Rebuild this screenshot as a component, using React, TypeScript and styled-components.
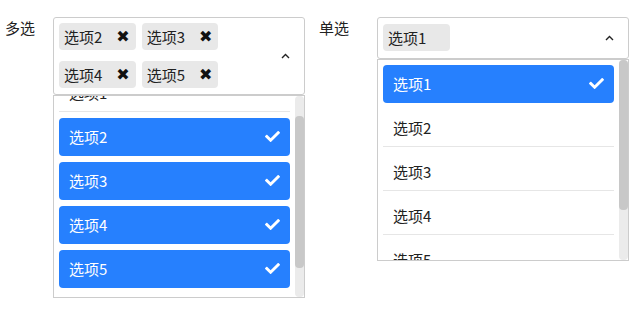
import React, { useEffect, useRef, useState } from 'react'
import styled, { createGlobalStyle } from 'styled-components'
import { FaCheck } from 'react-icons/fa'

const GlobalStyle = createGlobalStyle`
  body {
    margin: 0;
    font-family: "Noto Sans CJK SC", "Noto Sans", sans-serif;
    font-size: 15px;
    color: #222;
    background: #fff;
  }
`

const Page = styled.div`
  display: flex;
  align-items: flex-start;
  padding: 17px 0 0 5px;
`

const Field = styled.div`
  display: flex;
  align-items: flex-start;
  margin-right: 14px;
`

const Label = styled.div<{ $w: number }>`
  width: ${(p) => p.$w}px;
  line-height: 20px;
  padding-top: 1px;
`

const SelectWrap = styled.div`
  width: 252px;
  display: flex;
  flex-direction: column;
`

const SelectBox = styled.div`
  box-sizing: border-box;
  min-height: 42px;
  border: 1px solid #ccc;
  border-radius: 3px;
  padding: 5px 14px 6px 5px;
  display: flex;
  align-items: center;
`

const Tags = styled.div`
  flex: 1;
  display: flex;
  flex-wrap: wrap;
  gap: 11px 6px;
`

const Tag = styled.span<{ $single?: boolean }>`
  height: 27px;
  display: inline-flex;
  align-items: center;
  gap: 14px;
  padding: ${(p) => (p.$single ? '0 24px 0 5px' : '0 6px 0 5px')};
  background: #e8e8e8;
  border-radius: 4px;
  line-height: 1;
`

const Remove = styled.span`
  font-family: "DejaVu Sans", sans-serif;
  font-size: 16px;
  color: #111;
`

const Caret = styled.svg`
  width: 9px;
  height: 6px;
  flex: none;
`

const Dropdown = styled.div<{ $h: number }>`
  box-sizing: border-box;
  height: ${(p) => p.$h}px;
  border: 1px solid #ccc;
  display: flex;
`

const Viewport = styled.div`
  flex: 1;
  overflow: hidden;
`

const List = styled.div`
  padding: 5px 5px 42px 5px;
`

const Track = styled.div`
  width: 9px;
  flex: none;
  background: #ebebeb;
  border-radius: 4px;
  position: relative;
`

const Thumb = styled.div`
  position: absolute;
  left: 0;
  right: 0;
  background: #c8c8c8;
  border-radius: 4px;
`

const Option = styled.div<{ $selected: boolean }>`
  box-sizing: border-box;
  height: 38px;
  margin-bottom: 6px;
  padding: 0 10px;
  display: flex;
  align-items: center;
  justify-content: space-between;
  border-radius: ${(p) => (p.$selected ? '4px' : '0')};
  background: ${(p) => (p.$selected ? '#2680fe' : 'transparent')};
  color: ${(p) => (p.$selected ? '#fff' : '#222')};
  border-bottom: 1px solid ${(p) => (p.$selected ? 'transparent' : '#e6e6e6')};
  svg {
    font-size: 15px;
  }
`

const options = ['选项1', '选项2', '选项3', '选项4', '选项5']

function UpCaret() {
  return (
    <Caret viewBox="0 0 9 6">
      <polyline points="1,5 4.5,1.5 8,5" fill="none" stroke="#222" strokeWidth="1.4" />
    </Caret>
  )
}

function Select({
  selected,
  multiple,
  height,
  scrollTop = 0,
}: {
  selected: string[]
  multiple?: boolean
  height: number
  scrollTop?: number
}) {
  const viewRef = useRef<HTMLDivElement>(null)
  const [thumb, setThumb] = useState({ top: 0, height: 0 })

  useEffect(() => {
    const el = viewRef.current
    if (!el) return
    el.scrollTop = scrollTop
    const ratio = el.clientHeight / el.scrollHeight
    setThumb({ top: el.scrollTop * ratio, height: el.clientHeight * ratio })
  }, [scrollTop])

  return (
    <SelectWrap>
      <SelectBox>
        <Tags>
          {selected.map((s) => (
            <Tag key={s} $single={!multiple}>
              {s}
              {multiple && <Remove>✖</Remove>}
            </Tag>
          ))}
        </Tags>
        <UpCaret />
      </SelectBox>
      <Dropdown $h={height}>
        <Viewport ref={viewRef}>
          <List>
            {options.map((o) => {
              const on = selected.includes(o)
              return (
                <Option key={o} $selected={on}>
                  {o}
                  {on && <FaCheck />}
                </Option>
              )
            })}
          </List>
        </Viewport>
        <Track>
          <Thumb style={{ top: thumb.top, height: thumb.height }} />
        </Track>
      </Dropdown>
    </SelectWrap>
  )
}

export default function App() {
  return (
    <>
      <GlobalStyle />
      <Page>
        <Field>
          <Label $w={48}>多选</Label>
          <Select
            multiple
            selected={['选项2', '选项3', '选项4', '选项5']}
            height={203}
            scrollTop={27}
          />
        </Field>
        <Field>
          <Label $w={58}>单选</Label>
          <Select selected={['选项1']} height={202} />
        </Field>
      </Page>
    </>
  )
}
